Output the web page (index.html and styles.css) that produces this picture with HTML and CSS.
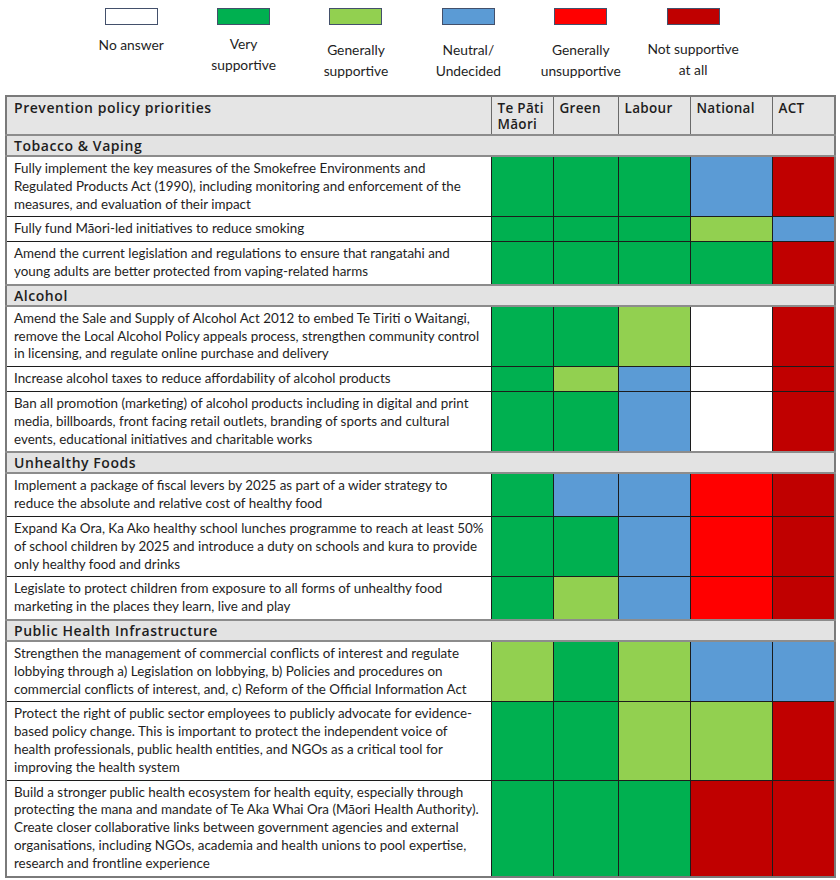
FILE: index.html
```html
<!DOCTYPE html>
<html lang="en">
<head>
<meta charset="utf-8">
<title>Prevention policy priorities</title>
<link rel="stylesheet" href="styles.css">
</head>
<body>
<div class="legend">
  <div class="legend-item">
    <span class="swatch c-na"></span>
    <span class="legend-label l-a">No answer</span>
  </div>
  <div class="legend-item">
    <span class="swatch c-vs"></span>
    <span class="legend-label l-b">Very<br>supportive</span>
  </div>
  <div class="legend-item">
    <span class="swatch c-gs"></span>
    <span class="legend-label l-c">Generally<br>supportive</span>
  </div>
  <div class="legend-item">
    <span class="swatch c-n"></span>
    <span class="legend-label l-c">Neutral/<br>Undecided</span>
  </div>
  <div class="legend-item">
    <span class="swatch c-gu"></span>
    <span class="legend-label l-c">Generally<br>unsupportive</span>
  </div>
  <div class="legend-item">
    <span class="swatch c-ns"></span>
    <span class="legend-label l-d">Not supportive<br>at all</span>
  </div>
</div>

<table class="matrix">
  <colgroup>
    <col class="col-text">
    <col class="col-tpm">
    <col class="col-green">
    <col class="col-labour">
    <col class="col-national">
    <col class="col-act">
  </colgroup>
  <thead>
    <tr class="head">
      <th class="head-main">Prevention policy priorities</th>
      <th>Te Pāti<br>Māori</th>
      <th>Green</th>
      <th>Labour</th>
      <th>National</th>
      <th>ACT</th>
    </tr>
  </thead>
  <tbody>
    <tr class="section"><td colspan="6">Tobacco &amp; Vaping</td></tr>
    <tr>
      <td class="txt">Fully implement the key measures of the Smokefree Environments and<br>Regulated Products Act (1990), including monitoring and enforcement of the<br>measures, and evaluation of their impact</td>
      <td class="c-vs"></td><td class="c-vs"></td><td class="c-vs"></td><td class="c-n"></td><td class="c-ns"></td>
    </tr>
    <tr>
      <td class="txt">Fully fund Māori-led initiatives to reduce smoking</td>
      <td class="c-vs"></td><td class="c-vs"></td><td class="c-vs"></td><td class="c-gs"></td><td class="c-n"></td>
    </tr>
    <tr>
      <td class="txt">Amend the current legislation and regulations to ensure that rangatahi and<br>young adults are better protected from vaping-related harms</td>
      <td class="c-vs"></td><td class="c-vs"></td><td class="c-vs"></td><td class="c-vs"></td><td class="c-ns"></td>
    </tr>
    <tr class="section"><td colspan="6">Alcohol</td></tr>
    <tr>
      <td class="txt">Amend the Sale and Supply of Alcohol Act 2012 to embed Te Tiriti o Waitangi,<br>remove the Local Alcohol Policy appeals process, strengthen community control<br>in licensing, and regulate online purchase and delivery</td>
      <td class="c-vs"></td><td class="c-vs"></td><td class="c-gs"></td><td class="c-na"></td><td class="c-ns"></td>
    </tr>
    <tr>
      <td class="txt">Increase alcohol taxes to reduce affordability of alcohol products</td>
      <td class="c-vs"></td><td class="c-gs"></td><td class="c-n"></td><td class="c-na"></td><td class="c-ns"></td>
    </tr>
    <tr>
      <td class="txt">Ban all promotion (marketing) of alcohol products including in digital and print<br>media, billboards, front facing retail outlets, branding of sports and cultural<br>events, educational initiatives and charitable works</td>
      <td class="c-vs"></td><td class="c-vs"></td><td class="c-n"></td><td class="c-na"></td><td class="c-ns"></td>
    </tr>
    <tr class="section"><td colspan="6">Unhealthy Foods</td></tr>
    <tr>
      <td class="txt">Implement a package of fiscal levers by 2025 as part of a wider strategy to<br>reduce the absolute and relative cost of healthy food</td>
      <td class="c-vs"></td><td class="c-n"></td><td class="c-n"></td><td class="c-gu"></td><td class="c-ns"></td>
    </tr>
    <tr>
      <td class="txt">Expand Ka Ora, Ka Ako healthy school lunches programme to reach at least 50%<br>of school children by 2025 and introduce a duty on schools and kura to provide<br>only healthy food and drinks</td>
      <td class="c-vs"></td><td class="c-vs"></td><td class="c-n"></td><td class="c-gu"></td><td class="c-ns"></td>
    </tr>
    <tr>
      <td class="txt">Legislate to protect children from exposure to all forms of unhealthy food<br>marketing in the places they learn, live and play</td>
      <td class="c-vs"></td><td class="c-gs"></td><td class="c-n"></td><td class="c-gu"></td><td class="c-ns"></td>
    </tr>
    <tr class="section"><td colspan="6">Public Health Infrastructure</td></tr>
    <tr>
      <td class="txt">Strengthen the management of commercial conflicts of interest and regulate<br>lobbying through a) Legislation on lobbying, b) Policies and procedures on<br>commercial conflicts of interest, and, c) Reform of the Official Information Act</td>
      <td class="c-gs"></td><td class="c-vs"></td><td class="c-gs"></td><td class="c-n"></td><td class="c-n"></td>
    </tr>
    <tr>
      <td class="txt">Protect the right of public sector employees to publicly advocate for evidence-<br>based policy change. This is important to protect the independent voice of<br>health professionals, public health entities, and NGOs as a critical tool for<br>improving the health system</td>
      <td class="c-vs"></td><td class="c-vs"></td><td class="c-gs"></td><td class="c-gs"></td><td class="c-ns"></td>
    </tr>
    <tr>
      <td class="txt">Build a stronger public health ecosystem for health equity, especially through<br>protecting the mana and mandate of Te Aka Whai Ora (Māori Health Authority).<br>Create closer collaborative links between government agencies and external<br>organisations, including NGOs, academia and health unions to pool expertise,<br>research and frontline experience</td>
      <td class="c-vs"></td><td class="c-vs"></td><td class="c-vs"></td><td class="c-ns"></td><td class="c-ns"></td>
    </tr>
  </tbody>
</table>
</body>
</html>
```

FILE: styles.css
```css
html, body {
  margin: 0;
  padding: 0;
  background: #ffffff;
}

body {
  font-family: "Lato", "Open Sans", sans-serif;
  color: #1e1e1e;
  width: 840px;
  height: 880px;
  overflow: hidden;
}

/* ---------- legend ---------- */
.legend {
  display: flex;
  padding: 8px 0 0 75px;
  height: 95px;
  box-sizing: border-box;
}

.legend-item {
  width: 112.4px;
  display: flex;
  flex-direction: column;
  align-items: center;
}

.swatch {
  display: block;
  width: 51px;
  height: 15px;
  border: 1px solid #43506b;
}

.legend-label {
  font-size: 13.8px;
  line-height: 20.5px;
  text-align: center;
  white-space: nowrap;
}

.l-a { margin-top: 10px; }
.l-b { margin-top: 9px; }
.l-c { margin-top: 15px; }
.l-d { margin-top: 14px; }

/* ---------- table ---------- */
.matrix {
  margin-left: 5px;
  width: 829px;
  border-collapse: collapse;
  table-layout: fixed;
  border: 2px solid #7a7a7a;
}

.col-text { width: 485px; }
.col-tpm { width: 62px; }
.col-green { width: 65px; }
.col-labour { width: 72px; }
.col-national { width: 82px; }
.col-act { width: 63px; }

.matrix th,
.matrix td {
  border: 1px solid #1c1c1c;
  padding: 0;
}

.head th {
  background: #e5e5e5;
  font-family: "Open Sans", "Noto Sans", sans-serif;
  font-weight: 600;
  font-size: 13.5px;
  letter-spacing: 0.3px;
  line-height: 16px;
  text-align: left;
  vertical-align: top;
  padding: 3px 6px 2px 6px;
  height: 31px;
  color: #1e1e1e;
  border-color: #6a6a6a;
  white-space: nowrap;
}

.head th.head-main {
  font-size: 14px;
  letter-spacing: 0.55px;
  padding-left: 7px;
}

.section td {
  background: #e3e3e3;
  font-family: "Open Sans", "Noto Sans", sans-serif;
  font-weight: 600;
  font-size: 14px;
  letter-spacing: 0.55px;
  line-height: 18px;
  padding: 1px 6px 0 7px;
  border-top: 2px solid #8c8c8c;
  border-bottom: 2px solid #8c8c8c;
  color: #1e1e1e;
}

.matrix td.txt {
  font-size: 13.4px;
  line-height: 17.8px;
  padding: 3px 6px 3px 7px;
  white-space: nowrap;
  vertical-align: top;
  background: #ffffff;
}

/* ---------- rating colours ---------- */
.c-na { background: #ffffff; }
.c-vs { background: #00b050; }
.c-gs { background: #92d050; }
.c-n  { background: #5b9bd5; }
.c-gu { background: #ff0000; }
.c-ns { background: #c00000; }
```
